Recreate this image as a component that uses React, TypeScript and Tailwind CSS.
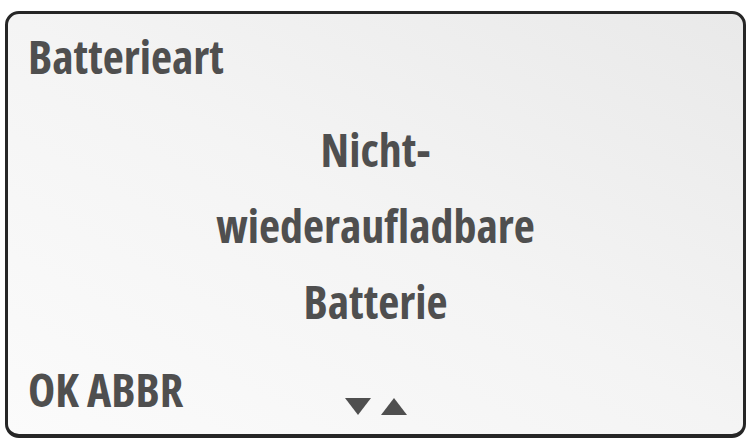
const Arrows = () => (
  <svg width="62" height="17" viewBox="0 0 62 17" className="mb-[2px] self-end">
    <polygon points="0,0 26,0 13,17" fill="#4f4f4f" />
    <polygon points="36,17 62,17 49,0" fill="#4f4f4f" />
  </svg>
);

const App = () => {
  return (
    <div className="w-[748px] h-[440px] bg-white pt-[11px] pl-[5px] pr-[2px] pb-[2px]">
      <div className="h-full rounded-[14px] border-[3px] border-b-[4px] border-[#262626] bg-gradient-to-tr from-[#fbfbfb] via-[#f4f4f4] to-[#e9e9e9] px-[20px] pt-[14px] pb-[17px] flex flex-col text-[#4f4f4f] font-bold font-stretch-condensed text-[46px] font-['Open_Sans',sans-serif]">
        <div className="leading-[56px] h-[56px]">Batterieart</div>

        <div className="mt-[27px] text-center leading-[76px]">
          <div>Nicht-</div>
          <div>wiederaufladbare</div>
          <div>Batterie</div>
        </div>

        <div className="mt-auto grid grid-cols-[1fr_auto_1fr] items-end leading-[56px] h-[56px]">
          <div>OK ABBR</div>
          <Arrows />
          <div />
        </div>
      </div>
    </div>
  );
};

export default App;
